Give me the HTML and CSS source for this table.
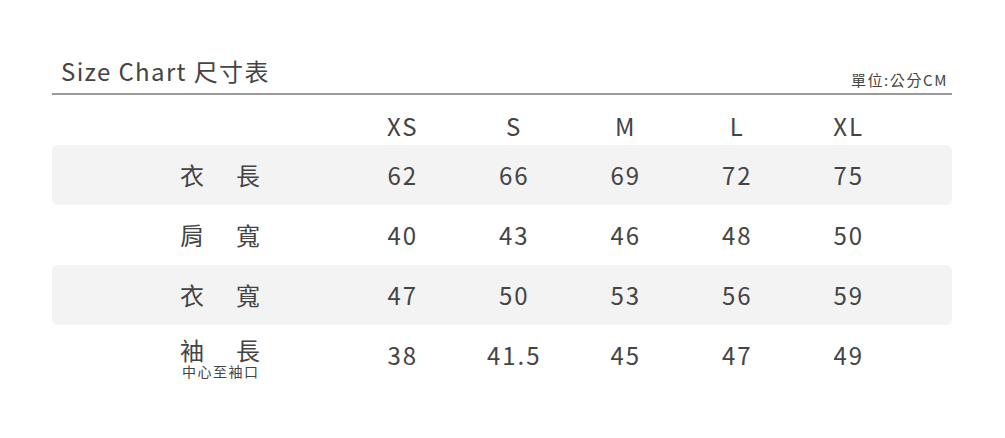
FILE: index.html
```html
<!DOCTYPE html>
<html lang="zh-Hant">
<head>
<meta charset="utf-8">
<title>Size Chart</title>
<link rel="stylesheet" href="styles.css">
</head>
<body>
<div class="chart">
  <div class="chart-head">
    <div class="title">Size Chart 尺寸表</div>
    <div class="unit">單位:公分CM</div>
  </div>
  <div class="table">
    <div class="row head-row">
      <div class="label"></div>
      <div class="cell">XS</div>
      <div class="cell">S</div>
      <div class="cell">M</div>
      <div class="cell">L</div>
      <div class="cell">XL</div>
    </div>
    <div class="row band">
      <div class="label"><div class="main"><span>衣</span><span>長</span></div></div>
      <div class="cell">62</div>
      <div class="cell">66</div>
      <div class="cell">69</div>
      <div class="cell">72</div>
      <div class="cell">75</div>
    </div>
    <div class="row">
      <div class="label"><div class="main"><span>肩</span><span>寬</span></div></div>
      <div class="cell">40</div>
      <div class="cell">43</div>
      <div class="cell">46</div>
      <div class="cell">48</div>
      <div class="cell">50</div>
    </div>
    <div class="row band">
      <div class="label"><div class="main"><span>衣</span><span>寬</span></div></div>
      <div class="cell">47</div>
      <div class="cell">50</div>
      <div class="cell">53</div>
      <div class="cell">56</div>
      <div class="cell">59</div>
    </div>
    <div class="row">
      <div class="label label-sub">
        <div class="main tight"><span>袖</span><span>長</span></div>
        <div class="sub">中心至袖口</div>
      </div>
      <div class="cell">38</div>
      <div class="cell">41.5</div>
      <div class="cell">45</div>
      <div class="cell">47</div>
      <div class="cell">49</div>
    </div>
  </div>
</div>
</body>
</html>
```

FILE: styles.css
```css
html, body {
  margin: 0;
  padding: 0;
  background: #ffffff;
}

body {
  font-family: "Noto Sans CJK TC", "Noto Sans", sans-serif;
  color: #444444;
}

.chart {
  width: 900px;
  margin-left: 52px;
  padding-top: 54px;
}

.chart-head {
  display: flex;
  justify-content: space-between;
  align-items: flex-end;
  padding: 0 4px 5px 9px;
  border-bottom: 2px solid #9a9a9a;
}

.title {
  font-size: 24px;
  line-height: 34px;
  letter-spacing: 1.35px;
}

.unit {
  font-size: 15px;
  line-height: 16px;
  letter-spacing: 1.6px;
}

.table {
  margin-top: 12px;
}

.row {
  display: grid;
  grid-template-columns: 294px repeat(5, 111.5px) 1fr;
  align-items: center;
  height: 60px;
  border-radius: 6px;
}

.row.head-row {
  height: 38px;
}

.row.band {
  background: #f3f3f3;
}

.label {
  padding-left: 128px;
}

.main {
  width: 80px;
  display: flex;
  justify-content: space-between;
  font-size: 24px;
  line-height: 30px;
}

.main.tight {
  line-height: 27px;
}

.label-sub {
  padding-top: 4px;
}

.sub {
  font-size: 14px;
  line-height: 16px;
  letter-spacing: 1.5px;
  padding-left: 2px;
}

.cell {
  text-align: center;
  font-size: 24px;
  line-height: 30px;
  letter-spacing: 2px;
  padding-left: 2px;
}
```
